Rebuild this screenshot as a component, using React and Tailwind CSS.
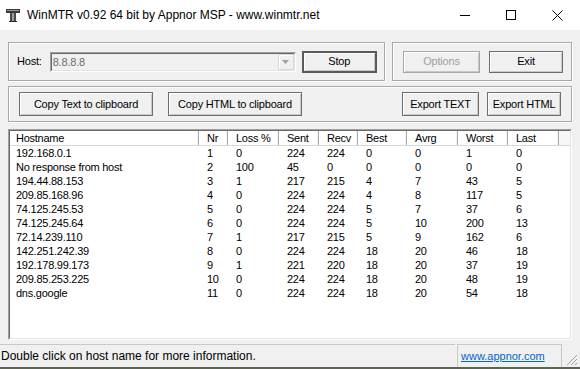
import React from "react";

const rows = [
  ["192.168.0.1", "1", "0", "224", "224", "0", "0", "1", "0"],
  ["No response from host", "2", "100", "45", "0", "0", "0", "0", "0"],
  ["194.44.88.153", "3", "1", "217", "215", "4", "7", "43", "5"],
  ["209.85.168.96", "4", "0", "224", "224", "4", "8", "117", "5"],
  ["74.125.245.53", "5", "0", "224", "224", "5", "7", "37", "6"],
  ["74.125.245.64", "6", "0", "224", "224", "5", "10", "200", "13"],
  ["72.14.239.110", "7", "1", "217", "215", "5", "9", "162", "6"],
  ["142.251.242.39", "8", "0", "224", "224", "18", "20", "46", "18"],
  ["192.178.99.173", "9", "1", "221", "220", "18", "20", "37", "19"],
  ["209.85.253.225", "10", "0", "224", "224", "18", "20", "48", "19"],
  ["dns.google", "11", "0", "224", "224", "18", "20", "54", "18"],
];

const cols = [
  { name: "Hostname", w: "w-[189px]", pad: "pl-[6px]" },
  { name: "Nr", w: "w-[29px]", pad: "pl-[8px]" },
  { name: "Loss %", w: "w-[51px]", pad: "pl-[8px]" },
  { name: "Sent", w: "w-[40px]", pad: "pl-[8px]" },
  { name: "Recv", w: "w-[39px]", pad: "pl-[8px]" },
  { name: "Best", w: "w-[49px]", pad: "pl-[8px]" },
  { name: "Avrg", w: "w-[51px]", pad: "pl-[8px]" },
  { name: "Worst", w: "w-[50px]", pad: "pl-[8px]" },
  { name: "Last", w: "w-[51px]", pad: "pl-[8px]" },
];

const classic = { fontFamily: '"Liberation Sans", Arial, sans-serif' };

function Btn({ children, w, h = "h-[22px]", disabled, def }) {
  return (
    <div
      className={`${w} ${h} flex items-center justify-center bg-[#f0f0f0] text-[11px] tracking-[-0.2px] ${
        def
          ? "border-2 border-[#5a5a5a]"
          : disabled
          ? "border border-[#a8a8a8]"
          : "border border-[#6e6e6e]"
      } ${disabled ? "text-[#a0a0a0]" : "text-black"} shadow-[inset_1px_1px_0_#ffffff,inset_-1px_-1px_0_#c8c8c8]`}
      style={classic}
    >
      {children}
    </div>
  );
}

function Group({ className, children }) {
  return (
    <div
      className={`${className} border border-[#a9a9a9] shadow-[inset_1px_1px_0_#ffffff,1px_1px_0_#ffffff]`}
    >
      {children}
    </div>
  );
}

export default function App() {
  return (
    <div className="w-[580px] h-[369px] flex flex-col bg-[#f0f0f0] overflow-hidden select-none">
      {/* Title bar */}
      <div className="h-[30px] bg-white flex items-center shrink-0">
        <svg width="16" height="16" viewBox="0 0 16 16" className="ml-[5px] mr-[6px]">
          <rect x="1" y="2" width="14" height="4" fill="#3a3a3a" />
          <rect x="2" y="3" width="12" height="1" fill="#9a9a9a" />
          <rect x="5" y="6" width="6" height="8" fill="#4a4a4a" />
          <rect x="7" y="6" width="2" height="8" fill="#9a9a9a" />
          <rect x="4" y="14" width="8" height="1" fill="#2a2a2a" />
        </svg>
        <span className="text-[12px] text-black" style={classic}>
          WinMTR v0.92 64 bit by Appnor MSP - www.winmtr.net
        </span>
        <div className="ml-auto flex h-full">
          <div className="w-[46px] flex items-center justify-center">
            <div className="w-[10px] h-px bg-black" />
          </div>
          <div className="w-[46px] flex items-center justify-center">
            <div className="w-[10px] h-[10px] border border-black" />
          </div>
          <div className="w-[46px] flex items-center justify-center">
            <svg width="11" height="11" viewBox="0 0 11 11">
              <path d="M0.5 0.5 L10.5 10.5 M10.5 0.5 L0.5 10.5" stroke="#000" strokeWidth="1" />
            </svg>
          </div>
        </div>
      </div>

      {/* Body */}
      <div className="flex flex-col px-[8px] pt-[12px]">
        <div className="flex gap-[7px] h-[39px]">
          <Group className="w-[377px] flex items-center pl-[8px]">
            <span className="text-[11px] tracking-[-0.2px] text-black" style={classic}>
              Host:
            </span>
            <div className="ml-[8px] w-[246px] h-[20px] flex border border-t-[#a0a0a0] border-l-[#a0a0a0] border-r-white border-b-white">
              <div className="flex-1 flex border border-t-[#696969] border-l-[#696969] border-r-[#e3e3e3] border-b-[#e3e3e3] bg-[#f0f0f0]">
                <span className="flex-1 pl-[1px] text-[11px] tracking-[-0.2px] text-[#6d6d6d] leading-[16px]" style={classic}>
                  8.8.8.8
                </span>
                <div className="w-[16px] h-full flex items-center justify-center bg-[#f0f0f0] border border-[#d8d8d8] shadow-[inset_1px_1px_0_#ffffff]">
                  <svg width="7" height="4" viewBox="0 0 7 4">
                    <path d="M0 0 H7 L3.5 4 Z" fill="#a0a0a0" />
                  </svg>
                </div>
              </div>
            </div>
            <div className="ml-[6px]">
              <Btn w="w-[75px]" def>
                Stop
              </Btn>
            </div>
          </Group>
          <Group className="flex-1 flex items-center pl-[10px] gap-[9px]">
            <Btn w="w-[77px]" disabled>
              Options
            </Btn>
            <Btn w="w-[74px]">Exit</Btn>
          </Group>
        </div>

        <Group className="mt-[5px] h-[36px] flex items-center pl-[10px] pr-[10px]">
          <Btn w="w-[134px]" h="h-[24px]">
            Copy Text to clipboard
          </Btn>
          <div className="ml-[15px]">
            <Btn w="w-[134px]" h="h-[24px]">
              Copy HTML to clipboard
            </Btn>
          </div>
          <div className="ml-auto flex gap-[8px]">
            <Btn w="w-[77px]" h="h-[24px]">
              Export TEXT
            </Btn>
            <Btn w="w-[74px]" h="h-[24px]">
              Export HTML
            </Btn>
          </div>
        </Group>

        {/* List view */}
        <div className="mt-[7px] h-[211px] border border-t-[#a0a0a0] border-l-[#a0a0a0] border-r-white border-b-white">
          <div className="h-full bg-white border border-t-[#696969] border-l-[#696969] border-r-[#e3e3e3] border-b-[#e3e3e3] text-[11px] tracking-[-0.25px] text-black" style={classic}>
            <div className="flex h-[15px] border-b border-[#d8d8d8]">
              {cols.map((c) => (
                <div
                  key={c.name}
                  className={`${c.w} ${c.pad} shrink-0 leading-[14px] border-r border-[#a8a8a8] shadow-[inset_-1px_0_0_#f4f4f4]`}
                >
                  {c.name}
                </div>
              ))}
              <div className="flex-1 bg-[#f7f7f7]" />
            </div>
            {rows.map((r, i) => (
              <div key={i} className="flex h-[14px] leading-[14px]">
                {r.map((v, j) => (
                  <div key={j} className={`${cols[j].w} ${cols[j].pad} shrink-0 whitespace-nowrap`}>
                    {v}
                  </div>
                ))}
              </div>
            ))}
          </div>
        </div>
      </div>

      {/* Status bar */}
      <div className="mt-[4px] h-[23px] flex items-stretch shrink-0" style={classic}>
        <div className="w-[455px] border-t border-[#c8c8c8] flex items-center pl-[1px] text-[12px] text-black">
          Double click on host name for more information.
        </div>
        <div className="ml-[2px] w-[105px] border-t border-l border-r border-[#c8c8c8] flex items-center pl-[3px] text-[11px]">
          <span className="text-[#0066cc] underline">www.appnor.com</span>
        </div>
        <div className="flex-1 flex items-end justify-end pr-[2px] pb-[1px]">
          <svg width="12" height="12" viewBox="0 0 12 12">
            <path d="M11 1 L1 11 M11 5 L5 11 M11 9 L9 11" stroke="#a0a0a0" strokeWidth="1" />
          </svg>
        </div>
      </div>
      <div className="h-[2px] bg-[#5b6552] shrink-0" />
    </div>
  );
}
